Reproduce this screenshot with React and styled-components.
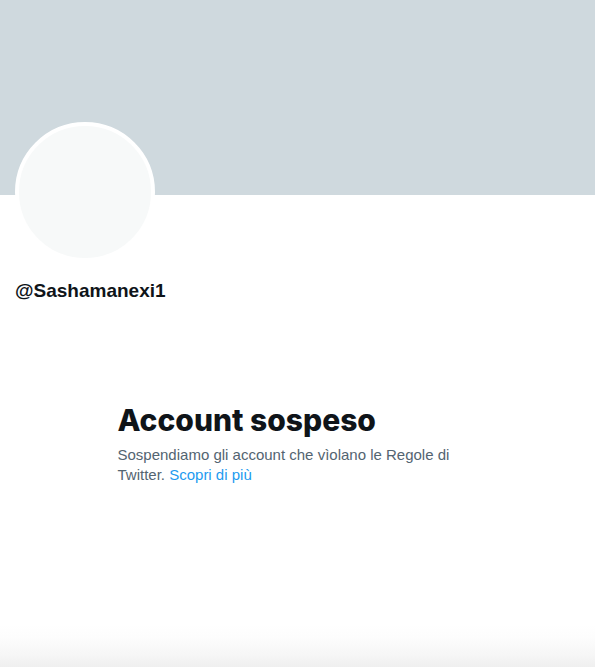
import React from "react";
import styled, { createGlobalStyle } from "styled-components";

const GlobalStyle = createGlobalStyle`
  html, body {
    margin: 0;
    padding: 0;
  }
  body {
    font-family: "Liberation Sans", Arial, sans-serif;
    color: #0f1419;
    background: #ffffff;
  }
`;

const Page = styled.div`
  min-height: 100vh;
  display: flex;
  flex-direction: column;
  background: linear-gradient(
    to bottom,
    #ffffff 0,
    #ffffff calc(100% - 42px),
    #fdfdfd calc(100% - 30px),
    #f6f6f6 calc(100% - 12px),
    #efefef 100%
  );
`;

const Banner = styled.div`
  height: 195px;
  background: #cfd9de;
  flex-shrink: 0;
`;

const ProfileHeader = styled.div`
  display: flex;
  flex-direction: column;
  align-items: flex-start;
  padding: 0 15px;
`;

const Avatar = styled.div`
  width: 140px;
  height: 140px;
  box-sizing: border-box;
  margin-top: -73px;
  border-radius: 50%;
  border: 4px solid #ffffff;
  background: #f7f9f9;
`;

const Handle = styled.div`
  margin-top: 17px;
  font-size: 19px;
  line-height: 24px;
  font-weight: 700;
  color: #0f1419;
`;

const Notice = styled.section`
  width: 360px;
  margin: 99px auto 0;
`;

const Title = styled.h1`
  margin: 0;
  font-family: Inter, "Liberation Sans", sans-serif;
  font-size: 30px;
  line-height: 36px;
  font-weight: 800;
  color: #0f1419;
`;

const Body = styled.p`
  margin: 7px 0 0;
  font-size: 15px;
  line-height: 20px;
  color: #536471;
`;

const Link = styled.a`
  color: #1d9bf0;
  text-decoration: none;
`;

export default function App() {
  return (
    <>
      <GlobalStyle />
      <Page>
        <Banner />
        <ProfileHeader>
          <Avatar />
          <Handle>@Sashamanexi1</Handle>
        </ProfileHeader>
        <Notice>
          <Title>Account sospeso</Title>
          <Body>
            Sospendiamo gli account che vìolano le Regole di Twitter.{" "}
            <Link href="#">Scopri di più</Link>
          </Body>
        </Notice>
      </Page>
    </>
  );
}
